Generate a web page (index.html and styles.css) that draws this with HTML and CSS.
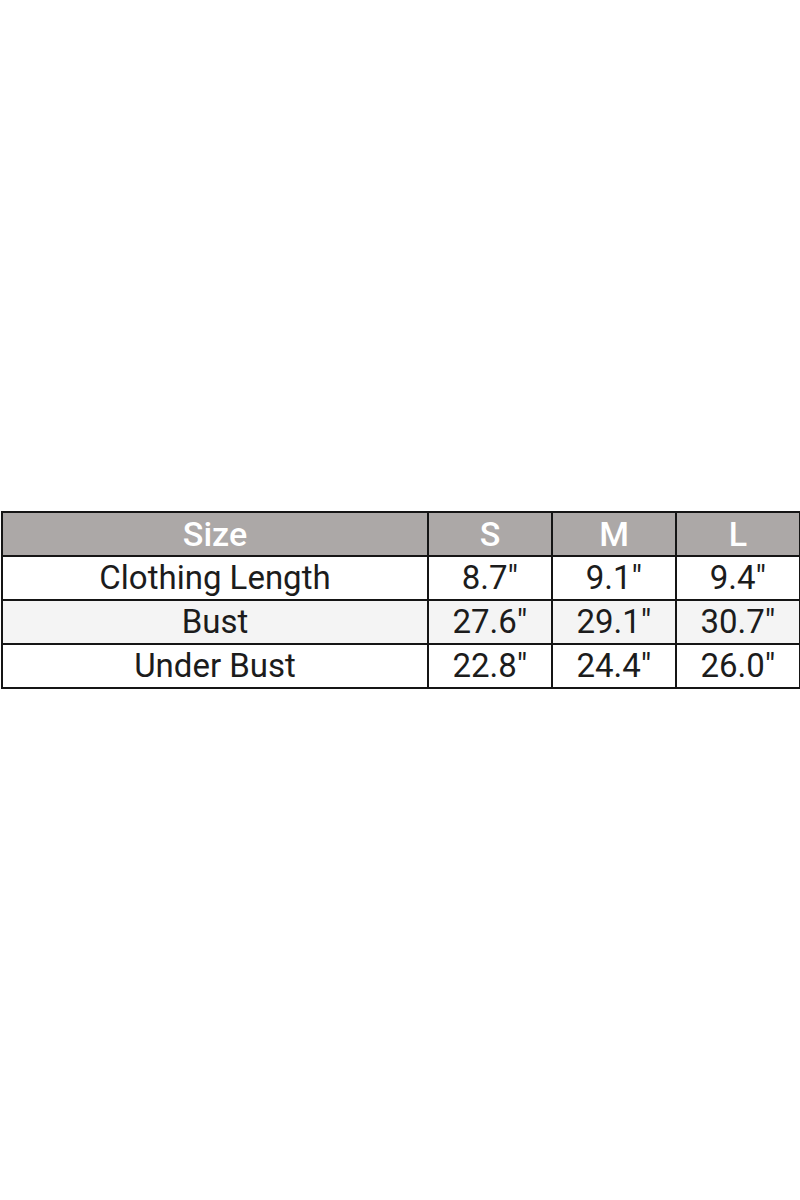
FILE: index.html
```html
<!DOCTYPE html>
<html>
<head>
<meta charset="utf-8">
<link rel="stylesheet" href="styles.css">
</head>
<body>
<div class="page">
<table class="sizes">
  <colgroup>
    <col class="c-name"><col class="c-size"><col class="c-size"><col class="c-size">
  </colgroup>
  <thead>
    <tr><th>Size</th><th>S</th><th>M</th><th>L</th></tr>
  </thead>
  <tbody>
    <tr><td>Clothing Length</td><td>8.7"</td><td>9.1"</td><td>9.4"</td></tr>
    <tr class="alt"><td>Bust</td><td>27.6"</td><td>29.1"</td><td>30.7"</td></tr>
    <tr><td>Under Bust</td><td>22.8"</td><td>24.4"</td><td>26.0"</td></tr>
  </tbody>
</table>
</div>
</body>
</html>
```
FILE: styles.css
```css
html, body {
  margin: 0;
  padding: 0;
  background: #fff;
}
.page {
  width: 800px;
  height: 1200px;
  display: flex;
  align-items: center;
}
.sizes {
  border-collapse: collapse;
  width: 795px;
  margin-left: 1px;
  font-family: Roboto, "Liberation Sans", sans-serif;
  font-size: 33px;
  color: #1c1c1c;
  table-layout: fixed;
}
.c-name { width: 426px; }
.c-size { width: 124px; }
.sizes th, .sizes td {
  border: 2px solid #151515;
  height: 42px;
  padding: 0;
  text-align: center;
  line-height: 42px;
}
.sizes th {
  background: #aca8a7;
  color: #fff;
  font-weight: 500;
  font-size: 34px;
}
.sizes tr.alt td {
  background: #f4f4f4;
}
```
